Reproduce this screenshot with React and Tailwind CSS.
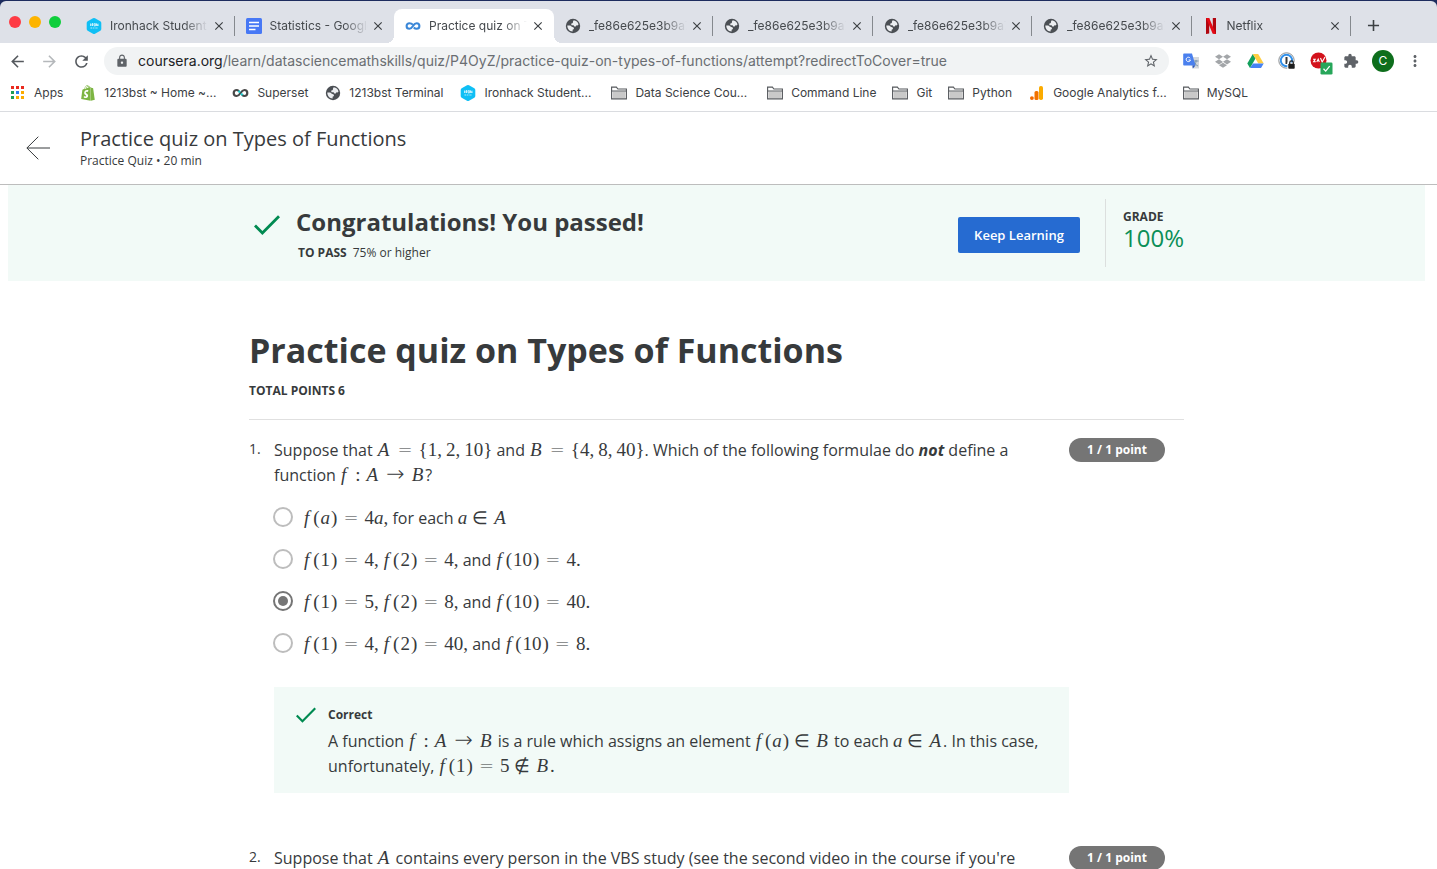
import React from "react";
import {
  MdArrowBack,
  MdArrowForward,
  MdRefresh,
  MdLock,
  MdStarBorder,
  MdExtension,
  MdMoreVert,
  MdClose,
  MdAdd,
} from "react-icons/md";
import { FaDropbox, FaShopify } from "react-icons/fa";

/* ---------- icons ---------- */

function Hexagon() {
  return (
    <svg width="16" height="16" viewBox="0 0 16 16" aria-hidden="true">
      <path
        d="M7 .3a2 2 0 0 1 2 0l5.300 3a2 2 0 0 1 1 1.700v6a2 2 0 0 1-1 1.700l-5.300 3a2 2 0 0 1-2 0l-5.300-3a2 2 0 0 1-1-1.700V5a2 2 0 0 1 1-1.700z"
        fill="#0fbff5"
      />
      <path
        d="M4.500 5.500v2.500M6 8V5.600h1v1.200H6l1 1.200M8.200 5.600h1.200V8H8.200zM10.500 8V5.600L12 8V5.600M4.500 10h1.500M6.700 10h1.200M8.600 10h1M10.200 10h1.300"
        stroke="#fff"
        strokeWidth=".7"
        fill="none"
      />
    </svg>
  );
}

function Docs() {
  return (
    <svg width="16" height="16" viewBox="0 0 16 16" aria-hidden="true">
      <rect width="16" height="16" rx="1.500" fill="#4778f5" />
      <path d="M3 4.500h10M3 8h10M3 11.500h6.500" stroke="#fff" strokeWidth="1.600" />
    </svg>
  );
}

function Coursera() {
  return (
    <svg width="17" height="16" viewBox="0 0 17 16" fill="none" stroke="#3a87d8" strokeWidth="2.200" aria-hidden="true">
      <path d="M8.300 6.600C7.300 5.400 6.200 5 4.700 5a3 3 0 0 0 0 6c1.500 0 2.500-1 3.800-3s2.300-3 3.800-3a3 3 0 0 1 0 6c-1.200 0-2.100-.4-3-1.300" />
    </svg>
  );
}

function Superset() {
  return (
    <svg width="17" height="16" viewBox="0 0 17 16" fill="none" strokeWidth="2.200" aria-hidden="true">
      <path d="M6.800 6C6 5.300 5.500 5 4.700 5a3 3 0 0 0 0 6c1.500 0 2.500-1 3.800-3s2.300-3 3.800-3a3 3 0 0 1 0 6c-.8 0-1.300-.3-2.100-1" stroke="#484848" />
      <path d="M6.500 5.800 8 7.500M9 8.500l1.500 1.700" stroke="#20c7c9" />
    </svg>
  );
}

function Netflix() {
  return (
    <svg width="16" height="16" viewBox="0 0 16 16" aria-hidden="true">
      <path d="M3 0h3.200v15.600L3 16zM9.800 0H13v16l-3.200-.4z" fill="#b1060f" />
      <path d="M3 0h3.200L13 16l-3.400-.4z" fill="#e50914" />
    </svg>
  );
}

function Folder() {
  return (
    <svg width="16" height="16" viewBox="0 0 16 16" aria-hidden="true">
      <path d="M.6 13.900V2.100h4.800l1.500 1.900h8.500v9.900z" fill="#fff" stroke="#55585c" strokeWidth="1.100" />
      <path d="M1.500 6.500h13v6.500h-13z" fill="#c9c9c9" />
      <path d="M.6 6h14.800" stroke="#55585c" strokeWidth="1" />
    </svg>
  );
}

function Analytics() {
  return (
    <svg width="16" height="16" viewBox="0 0 16 16" aria-hidden="true">
      <rect x="10" y="1" width="4" height="14" rx="1.800" fill="#fbab00" />
      <rect x="5.500" y="6" width="4" height="9" rx="1.500" fill="#f27300" />
      <circle cx="2.900" cy="13.100" r="1.900" fill="#f26a00" />
    </svg>
  );
}

function AppsGrid() {
  const colors = ["#ea2a1e", "#ea2a1e", "#ea2a1e", "#1f9d55", "#2a7df0", "#fbab00", "#1f9d55", "#fbab00", "#fbab00"];
  return (
    <svg width="16" height="16" viewBox="0 0 16 16" aria-hidden="true">
      {colors.map((c, i) => (
        <rect key={i} x={1 + (i % 3) * 5} y={1 + Math.floor(i / 3) * 5} width="3" height="3" fill={c} />
      ))}
    </svg>
  );
}

function Shop() {
  return <FaShopify className="size-4 text-[#7db543]" aria-hidden="true" />;
}

function Globe() {
  return (
    <svg width="16" height="16" viewBox="0 0 16 16" aria-hidden="true">
      <circle cx="8" cy="8" r="7.200" fill="#4b4f54" />
      <path
        d="M8.700 2.300c2.400.2 4.300 1.900 4.800 4.200-.5.900-1.300 1-2 .8l-.8 1.200H9.300L8.600 7.300H6.500l-.4-1.600 1.700-.6.200-1.500z"
        fill="#eceef1"
      />
      <path d="M2.300 7.600h3l1.500 1.200 1.900.6.300 1.500-1.400.9v1.800C4.500 13.400 2.300 11 2.300 7.600z" fill="#eceef1" />
    </svg>
  );
}

function Translate() {
  return (
    <svg width="17" height="17" viewBox="0 0 17 17" aria-hidden="true">
      <path d="M6 4h10v11.500H9.500z" fill="#d5d8dc" />
      <path d="M10.500 8h5M13 7v1c0 2-1 4-2.500 5M11 9c.8 1.800 2.200 3.200 4 4" stroke="#6f8fa6" strokeWidth=".9" fill="none" />
      <path d="M1 .5h8l3.500 12H1a.8.800 0 0 1-.8-.8V1.300A.8.800 0 0 1 1 .5z" fill="#4a80ee" />
      <path d="m9.500 12.500 3 0-2.700 3z" fill="#2c56b8" />
      <path d="M7.200 5.200A2.200 2.200 0 1 0 7.500 7H5.600" stroke="#fff" strokeWidth="1" fill="none" />
    </svg>
  );
}

function Drive() {
  return (
    <svg width="17" height="16" viewBox="0 0 17 16" aria-hidden="true">
      <path d="M5.800 1 .3 10.400 3 15l5.500-9.400z" fill="#12a05c" />
      <path d="M5.800 1h5.400l5.500 9.400h-5.400z" fill="#ffce42" />
      <path d="M6 10.400h10.700L14 15H3z" fill="#4683f4" />
    </svg>
  );
}

function OnePassword() {
  return (
    <svg width="18" height="18" viewBox="0 0 18 18" aria-hidden="true">
      <circle cx="8.500" cy="8.500" r="7.700" fill="#fff" stroke="#7c8085" strokeWidth=".9" />
      <circle cx="8.500" cy="8.500" r="5.700" fill="#fff" stroke="#2f8fea" strokeWidth="1.900" />
      <path d="M8.500 5v7" stroke="#33373b" strokeWidth="2" />
      <path d="M9.300 10.500h8v7h-8z" fill="#fff" />
      <rect x="10.300" y="11.800" width="6.400" height="5" rx=".8" fill="#1d1d1d" />
      <path d="M11.700 12v-1.300a1.800 1.800 0 0 1 3.600 0V12" stroke="#1d1d1d" strokeWidth="1.200" fill="none" />
    </svg>
  );
}

function Guard() {
  return (
    <svg width="23" height="23" viewBox="0 0 23 23" aria-hidden="true">
      <circle cx="8.500" cy="8.500" r="8" fill="#d3121c" />
      <path d="M3 7.300h2.200l-1.600 2.500h2.200M6.800 10l1.400-2.900L9.300 10M10.500 6l1.700 4L15 5" stroke="#fff" strokeWidth="1.100" fill="none" />
      <rect x="10.500" y="10.500" width="12" height="12" rx="1.300" fill="#27a65a" />
      <path d="m13.500 16.800 2.200 2.300 4-5" stroke="#fff" strokeWidth="1.300" fill="none" />
    </svg>
  );
}

function BackArrow() {
  return (
    <svg width="24" height="24" viewBox="0 0 24 24" fill="none" stroke="#373a3c" aria-hidden="true">
      <path d="M12.300 .7.9 12l11.400 11.300" strokeWidth="1" />
      <path d="M.9 12H24" strokeWidth="1" />
    </svg>
  );
}

function Check({ className }) {
  return (
    <svg className={className} viewBox="0 0 26 20" fill="none" aria-hidden="true">
      <path d="M1 10.500 8.400 18 25 1.200" stroke="#008a51" strokeWidth="2.800" />
    </svg>
  );
}

/* ---------- browser chrome ---------- */

const tabs = [
  { title: "Ironhack Student Portal", Icon: Hexagon },
  { title: "Statistics - Google Docs", Icon: Docs },
  { title: "Practice quiz on Types", Icon: Coursera, active: true },
  { title: "_fe86e625e3b9a7", Icon: Globe },
  { title: "_fe86e625e3b9a7", Icon: Globe },
  { title: "_fe86e625e3b9a7", Icon: Globe },
  { title: "_fe86e625e3b9a7", Icon: Globe },
  { title: "Netflix", Icon: Netflix },
];

const bookmarks = [
  { label: "Apps", Icon: AppsGrid },
  { label: "1213bst ~ Home ~...", Icon: Shop },
  { label: "Superset", Icon: Superset },
  { label: "1213bst Terminal", Icon: Globe },
  { label: "Ironhack Student...", Icon: Hexagon, wide: true },
  { label: "Data Science Cou...", Icon: Folder, wide: true },
  { label: "Command Line", Icon: Folder },
  { label: "Git", Icon: Folder },
  { label: "Python", Icon: Folder },
  { label: "Google Analytics f...", Icon: Analytics },
  { label: "MySQL", Icon: Folder },
];

function Tab({ title, Icon, active, divided }) {
  return (
    <div
      className={
        active
          ? "relative flex min-w-0 flex-1 items-center rounded-t-lg bg-white pr-2 pl-[11px]"
          : "relative flex min-w-0 flex-1 items-center pr-2 pl-[11px]"
      }
    >
      {active && (
        <>
          <span className="absolute bottom-0 -left-2 size-2 bg-[radial-gradient(circle_at_0_0,transparent_8px,white_8px)]" />
          <span className="absolute -right-2 bottom-0 size-2 bg-[radial-gradient(circle_at_100%_0,transparent_8px,white_8px)]" />
        </>
      )}
      <span className="flex size-4 shrink-0 items-center justify-center">
        <Icon />
      </span>
      <span className="ml-2 w-[98px] overflow-hidden mask-r-from-75% mask-r-to-100% whitespace-nowrap text-[#45494d]">
        {title}
      </span>
      <button type="button" aria-label={"Close " + title} className="ml-auto flex size-4 items-center justify-center text-[#3c4043]">
        <MdClose className="size-3.5" />
      </button>
      {divided && <span className="absolute top-[7px] right-0 h-5 w-px bg-[#85898e]" />}
    </div>
  );
}

function Browser() {
  return (
    <header className="shrink-0 bg-[#1d2c5e] pt-px font-['Inter','Liberation_Sans',sans-serif] text-xs">
      <div className="flex h-[42px] rounded-t-md bg-[#dee1e8] pt-2">
        <div className="flex w-[75px] shrink-0 gap-2 pt-[7px] pl-[9px]">
          <span className="size-3 rounded-full bg-[#fe3b45]" />
          <span className="size-3 rounded-full bg-[#fdb400]" />
          <span className="size-3 rounded-full bg-[#0fce3c]" />
        </div>
        <nav aria-label="Tabs" className="flex min-w-0 flex-1">
          {tabs.map((t, i) => (
            <Tab key={i} {...t} divided={i !== 1 && i !== 2} />
          ))}
        </nav>
        <div className="w-[86px] shrink-0 pt-[7px] pl-[13px]">
          <button type="button" aria-label="New tab" className="block text-[#3c4043]">
            <MdAdd className="size-[19px]" />
          </button>
        </div>
      </div>

      <div className="flex h-[37px] items-center bg-white pr-1.5 pb-px">
        <div className="flex w-[104px] shrink-0 gap-[13px] pl-2 text-[#55595e]">
          <button type="button" aria-label="Back"><MdArrowBack className="size-[19px]" /></button>
          <button type="button" aria-label="Forward" className="text-[#b5b8bb]"><MdArrowForward className="size-[19px]" /></button>
          <button type="button" aria-label="Reload"><MdRefresh className="size-[19px]" /></button>
        </div>
        <div className="flex h-7 min-w-0 flex-1 items-center rounded-full bg-[#f1f3f4] pr-2.5 pl-[11px]">
          <MdLock className="size-3.5 shrink-0 text-[#5f6368]" />
          <span className="ml-[9px] flex-1 overflow-hidden text-sm whitespace-nowrap text-[#6a6e72]">
            <span className="text-[#202124]">coursera.org</span>
            /learn/datasciencemathskills/quiz/P4OyZ/practice-quiz-on-types-of-functions/attempt?redirectToCover=true
          </span>
          <button type="button" aria-label="Bookmark this page" className="text-[#5f6368]">
            <MdStarBorder className="size-4" />
          </button>
        </div>
        <div className="flex shrink-0 items-center pl-1.5">
          <span className="flex w-8 justify-center"><Translate /></span>
          <span className="flex w-8 justify-center"><FaDropbox className="size-4 text-[#a3a6a9]" /></span>
          <span className="flex w-8 justify-center"><Drive /></span>
          <span className="flex w-8 justify-center"><OnePassword /></span>
          <span className="flex w-8 justify-center pt-1 pl-1"><Guard /></span>
          <button type="button" aria-label="Extensions" className="flex w-8 justify-center text-[#5f6368]">
            <MdExtension className="size-4" />
          </button>
          <button type="button" aria-label="Profile" className="mx-[5px] size-[22px] rounded-full bg-[#0e6e1c] text-xs text-white">
            C
          </button>
          <button type="button" aria-label="Menu" className="flex w-8 justify-center text-[#5f6368]">
            <MdMoreVert className="size-[18px]" />
          </button>
        </div>
      </div>

      <nav aria-label="Bookmarks" className="flex h-8 items-center gap-4 overflow-hidden border-b border-[#dadce0] bg-white pb-1.5 pl-[9px]">
        {bookmarks.map(({ label, Icon, wide }) => (
          <a key={label} href="#" className={wide ? "flex shrink-0 items-center gap-2 pr-1 text-[#3c4043]" : "flex shrink-0 items-center gap-2 text-[#3c4043]"}>
            <span className={Icon === Folder ? "flex w-4 justify-center" : "flex w-[17px] justify-center"}><Icon /></span>
            <span className="whitespace-nowrap">{label}</span>
          </a>
        ))}
      </nav>
    </header>
  );
}

/* ---------- math ---------- */

// V is an italic capital, A the lower-case variable, Eq / In / Arrow are relation signs.
const M = ({ children }) => (
  <span className="font-['Liberation_Serif',serif] text-[19px] leading-none whitespace-nowrap">{children}</span>
);
const V = ({ children }) => <i className="pr-0.5 pl-px">{children}</i>;
const A = () => <i>a</i>;
const F = () => <i className="pr-1 pl-px">f</i>;
const Eq = () => (
  <span className="px-[6px] font-['DejaVu_Sans',sans-serif] text-lg leading-none font-extralight">=</span>
);
const In = ({ children }) => (
  <span className="px-[5px] font-['DejaVu_Sans',sans-serif] text-lg leading-none font-extralight">{children}</span>
);
const Arrow = () => (
  <span className="px-[6px] font-['DejaVu_Sans',sans-serif] text-[22px] leading-none font-extralight">→</span>
);
const C = () => <span className="pr-1">,</span>;
const Fn = ({ of }) => (
  <>
    <F />
    <span className="pr-px">(</span>
    {of}
    <span className="pl-px">)</span>
  </>
);
const MapAB = () => (
  <M>
    <F />
    <span className="px-[5px]">:</span>
    <V>A</V>
    <Arrow />
    <V>B</V>
  </M>
);

/* ---------- quiz ---------- */

const options = [
  <>
    <M><Fn of={<A />} /><Eq />4<A />,</M> for each <M><A /><In>∈</In><V>A</V></M>
  </>,
  <>
    <M><Fn of="1" /><Eq />4<C /><Fn of="2" /><Eq />4,</M> and <M><Fn of="10" /><Eq />4.</M>
  </>,
  <>
    <M><Fn of="1" /><Eq />5<C /><Fn of="2" /><Eq />8,</M> and <M><Fn of="10" /><Eq />40.</M>
  </>,
  <>
    <M><Fn of="1" /><Eq />4<C /><Fn of="2" /><Eq />40,</M> and <M><Fn of="10" /><Eq />8.</M>
  </>,
];

function Question({ number, prompt, children }) {
  return (
    <li className="flex items-start">
      <span className="w-[25px] shrink-0 text-sm leading-[22px]">{number}.</span>
      <div className="min-w-0 flex-1">
        <div className="pr-6">{prompt}</div>
        {children}
      </div>
      <div className="w-[115px] shrink-0">
        <span className="block h-6 w-24 rounded-full bg-[#757575] text-center text-xs leading-6 font-bold text-white">
          1 / 1 point
        </span>
      </div>
    </li>
  );
}

export default function App() {
  const [choice, setChoice] = React.useState(2);
  return (
    <div className="flex h-screen flex-col overflow-hidden bg-white font-['Open_Sans','Noto_Sans',sans-serif] text-[#373a3c]">
      <Browser />

      <div className="flex shrink-0 items-center gap-[30px] border-b border-[#bdbdbd] pt-3.5 pb-3.5 pl-[26px]">
        <a href="#" aria-label="Back"><BackArrow /></a>
        <div>
          <div className="text-xl leading-[26px]">Practice quiz on Types of Functions</div>
          <div className="text-xs leading-[18px]">Practice Quiz • 20 min</div>
        </div>
      </div>

      <main className="min-h-0 flex-1 overflow-hidden pr-3 pl-2">
        <section className="bg-[#f2faf7]">
          <div className="mx-auto flex h-24 max-w-[935px] items-center">
            <Check className="mr-4 mb-4 ml-[5px] h-5 w-[26px] shrink-0" />
            <div className="flex-1 pt-0.5">
              <h2 className="text-2xl leading-8 font-bold">Congratulations! You passed!</h2>
              <p className="mt-[5px] pl-0.5 text-xs leading-5">
                <b className="mr-1.5">TO PASS</b>75% or higher
              </p>
            </div>
            <button type="button" className="mt-1 h-9 w-[122px] rounded-xs bg-[#266bd1] pt-0.5 text-[13px] font-semibold text-white">
              Keep Learning
            </button>
            <div className="ml-[25px] h-[68px] w-[79px] border-l border-[#dcdfde] pt-2 pl-[17px]">
              <div className="text-xs leading-5 font-bold">GRADE</div>
              <div className="text-2xl leading-[22px] text-[#0b8f57]">100%</div>
            </div>
          </div>
        </section>

        <div className="mx-auto max-w-[935px]">
          <h1 className="mt-[47px] text-[34px] leading-[44px] font-bold">Practice quiz on Types of Functions</h1>
          <p className="mt-2.5 border-b border-[#e0e0e0] pb-[19px] text-xs leading-[18px] font-bold">TOTAL POINTS 6</p>

          <ol className="mt-[18px] space-y-[53px] text-base leading-[25px]">
            <Question
              number={1}
              prompt={
                <>
                  Suppose that{" "}
                  <M><V>A</V><Eq />{"{"}1<C />2<C />10{"}"}</M> and{" "}
                  <M><V>B</V><Eq />{"{"}4<C />8<C />40{"}"}</M>. Which of the following formulae do{" "}
                  <b><i>not</i></b> define a function <MapAB />?
                </>
              }
            >
              <fieldset className="mt-[9px]">
                {options.map((o, i) => (
                  <label key={i} className="flex h-[42px] items-center">
                    <input
                      type="radio"
                      name="q1"
                      checked={choice === i}
                      onChange={() => setChoice(i)}
                      className="mr-2.5 mb-0.5 -ml-px size-5 shrink-0 appearance-none rounded-full border-2 border-[#bdbdbd] bg-white bg-clip-content p-[3px] checked:border-[#757575] checked:bg-[#757575]"
                    />
                    <span>{o}</span>
                  </label>
                ))}
              </fieldset>
              <div className="mt-[22px] flex bg-[#f2faf7] px-[22px] pt-[19px] pb-3.5">
                <Check className="mt-px mr-3 h-4 w-5 shrink-0" />
                <div>
                  <div className="mb-[5px] text-xs leading-[18px] font-bold">Correct</div>
                  <p>
                    A function <MapAB /> is a rule which assigns an element{" "}
                    <M><Fn of={<A />} /><In>∈</In><V>B</V></M> to each <M><A /><In>∈</In><V>A</V></M>. In this case,
                    unfortunately, <M><Fn of="1" /><Eq />5<In>∉</In><V>B</V>.</M>
                  </p>
                </div>
              </div>
            </Question>
            <Question
              number={2}
              prompt={
                <>
                  Suppose that <M><V>A</V></M> contains every person in the VBS study (see the second video in the
                  course if you're
                </>
              }
            />
          </ol>
        </div>
      </main>
    </div>
  );
}
